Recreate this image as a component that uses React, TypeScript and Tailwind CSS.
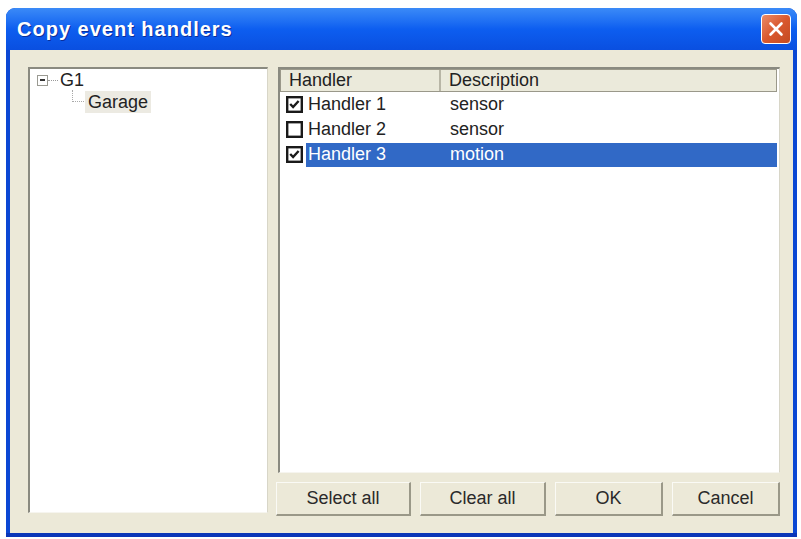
import React from "react"

const handlers = [
  { name: "Handler 1", desc: "sensor", checked: true, selected: false },
  { name: "Handler 2", desc: "sensor", checked: false, selected: false },
  { name: "Handler 3", desc: "motion", checked: true, selected: true },
]

const buttons = [
  { label: "Select all", w: "w-[135px]" },
  { label: "Clear all", w: "w-[126px]" },
  { label: "OK", w: "w-[108px]" },
  { label: "Cancel", w: "w-[108px]" },
]

const CheckBox = ({ checked }: { checked: boolean }) => (
  <svg width="17" height="17" viewBox="0 0 17 17" className="shrink-0">
    <rect x="1.2" y="1.2" width="14.6" height="14.6" fill="#fff" stroke="#1a1a1a" strokeWidth="2.4" />
    {checked && (
      <path d="M4.2 8 L7.1 11 L12.6 5" fill="none" stroke="#1a1a1a" strokeWidth="2.4" />
    )}
  </svg>
)

const App = () => {
  return (
    <div className="min-h-screen bg-white pt-[8px] pl-[6px] font-['Liberation_Sans',Arial,sans-serif] text-[18px] text-[#222]">
      <div className="w-[791px] h-[529px] flex flex-col rounded-t-[9px] bg-[#0b47d4] border-b-[4px] border-[#0a36b8]">
        {/* title bar */}
        <div className="h-[42px] flex items-center justify-between pl-[11px] pr-[6px] rounded-t-[9px] bg-gradient-to-b from-[#3b8af7] via-[#0d5ef0] to-[#0a4fe0]">
          <span className="text-white font-bold text-[20px] tracking-[1px] [text-shadow:1px_1px_0_#0a2f9a]">
            Copy event handlers
          </span>
          <div className="w-[30px] h-[30px] rounded-[4px] border-[1.5px] border-white bg-gradient-to-br from-[#e98a66] via-[#d9582e] to-[#c44a22] flex items-center justify-center">
            <svg width="18" height="18" viewBox="0 0 18 18">
              <path d="M3.5 3.5 L14.5 14.5 M14.5 3.5 L3.5 14.5" stroke="#fff" strokeWidth="2.6" strokeLinecap="round" />
            </svg>
          </div>
        </div>

        {/* body */}
        <div className="flex-1 mx-[4px] bg-[#ece9d8] flex gap-[10px] pl-[18px] pr-[13px] pt-[17px]">
          {/* tree */}
          <div className="w-[240px] h-[446px] bg-white border-t-2 border-l-2 border-t-[#8a8a80] border-l-[#8a8a80] border-b border-r border-b-[#f6f5ef] border-r-[#d8d6c8] pl-[7px] pt-[1px]">
            <div className="flex items-center h-[20px]">
              <div className="w-[11px] h-[11px] border border-[#9a9a92] bg-white flex items-center justify-center">
                <div className="w-[5px] h-[1.5px] bg-[#333]" />
              </div>
              <div className="w-[10px] border-t border-dotted border-[#999]" />
              <span className="ml-[2px]">G1</span>
            </div>
            <div className="flex items-start">
              <div className="ml-[35px] w-[12px] h-[12px] border-l border-b border-dotted border-[#aaa]" />
              <span className="ml-[1px] mt-[1px] px-[3px] leading-[22px] bg-[#eceae2]">Garage</span>
            </div>
          </div>

          {/* list + buttons */}
          <div className="w-[502px] flex flex-col">
            <div className="h-[406px] bg-white border-t-2 border-l-2 border-t-[#8a8a80] border-l-[#8a8a80] border-b border-r border-b-[#f6f5ef] border-r-[#d8d6c8] pr-[2px]">
              <div className="flex h-[23px] bg-[#ebeadb] border border-[#9a988a]">
                <div className="w-[160px] pl-[8px] leading-[20px] border-r-2 border-[#b8b6a6]">Handler</div>
                <div className="flex-1 pl-[8px] leading-[20px]">Description</div>
              </div>
              <div>
                {handlers.map((h) => (
                  <div key={h.name} className="flex items-center h-[25px] pl-[6px]">
                    <CheckBox checked={h.checked} />
                    <div
                      className={`flex flex-1 h-[24px] items-center ml-[3px] ${h.selected ? "bg-[#3169c6] text-white" : ""}`}
                    >
                      <span className="w-[144px] pl-[2px]">{h.name}</span>
                      <span>{h.desc}</span>
                    </div>
                  </div>
                ))}
              </div>
            </div>

            <div className="flex gap-[9px] mt-[9px] -ml-[2px]">
              {buttons.map((b) => (
                <button
                  key={b.label}
                  className={`${b.w} h-[34px] bg-[#ece9d8] border-t border-l border-t-[#fafaf5] border-l-[#fafaf5] border-b-2 border-r-2 border-b-[#9a9888] border-r-[#9a9888] text-[#2a2a2a]`}
                >
                  {b.label}
                </button>
              ))}
            </div>
          </div>
        </div>
      </div>
    </div>
  )
}

export default App
